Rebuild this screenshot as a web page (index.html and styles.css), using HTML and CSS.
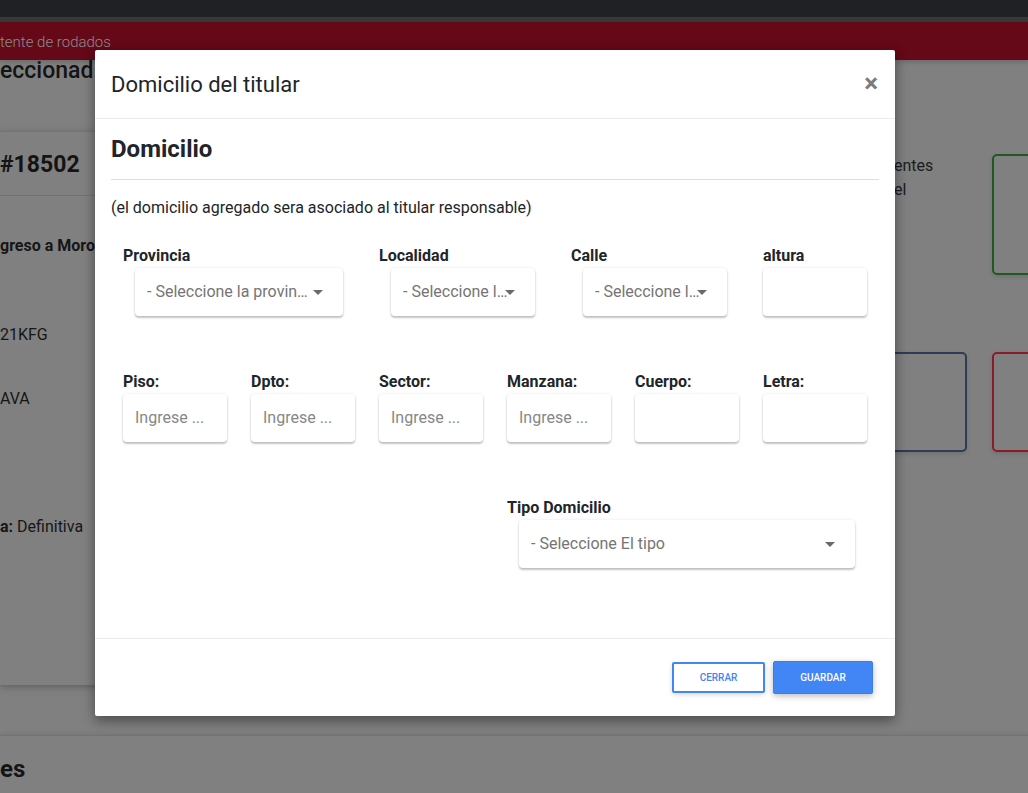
FILE: index.html
```html
<!DOCTYPE html>
<html lang="es">
<head>
<meta charset="utf-8">
<title>Domicilio del titular</title>
<link rel="stylesheet" href="styles.css">
</head>
<body>
<div class="topbar"></div>
<div class="topline"></div>
<nav class="nav"><span class="nav-text">tente de rodados</span></nav>
<main class="page">
  <h2 class="page-title">eccionad</h2>
  <div class="layout">
    <section class="card">
      <div class="card-head">#18502</div>
      <div class="card-body">
        <p class="line strong gap-a">greso a Moro</p>
        <p class="line gap-b">21KFG</p>
        <p class="line gap-c">AVA</p>
        <p class="line"><b>a:</b> Definitiva</p>
      </div>
    </section>
    <div class="spacer"></div>
    <aside class="side">
      <p class="side-text">entes<br>el</p>
      <div class="box green"></div>
      <div class="box blue"></div>
      <div class="box red"></div>
    </aside>
  </div>
  <section class="card2"><h2 class="card2-title">es</h2></section>
</main>

<div class="modal">
  <div class="modal-header">
    <h5 class="modal-title">Domicilio del titular</h5>
    <span class="close">&times;</span>
  </div>
  <div class="modal-body">
    <h4 class="section-title">Domicilio</h4>
    <hr class="divider">
    <p class="note">(el domicilio agregado sera asociado al titular responsable)</p>

    <div class="row">
      <div class="col c4">
        <label class="lbl">Provincia</label>
        <div class="select inset"><span class="sel-text">- Seleccione la provin…</span><span class="caret"></span></div>
      </div>
      <div class="col c3">
        <label class="lbl">Localidad</label>
        <div class="select inset"><span class="sel-text">- Seleccione l…</span><span class="caret"></span></div>
      </div>
      <div class="col c3">
        <label class="lbl">Calle</label>
        <div class="select inset"><span class="sel-text">- Seleccione l…</span><span class="caret"></span></div>
      </div>
      <div class="col c2">
        <label class="lbl">altura</label>
        <input class="field" type="text">
      </div>
    </div>

    <div class="row">
      <div class="col c2"><label class="lbl">Piso:</label><input class="field" type="text" placeholder="Ingrese ..."></div>
      <div class="col c2"><label class="lbl">Dpto:</label><input class="field" type="text" placeholder="Ingrese ..."></div>
      <div class="col c2"><label class="lbl">Sector:</label><input class="field" type="text" placeholder="Ingrese ..."></div>
      <div class="col c2"><label class="lbl">Manzana:</label><input class="field" type="text" placeholder="Ingrese ..."></div>
      <div class="col c2"><label class="lbl">Cuerpo:</label><input class="field" type="text"></div>
      <div class="col c2"><label class="lbl">Letra:</label><input class="field" type="text"></div>
    </div>

    <div class="row last">
      <div class="col c6 off6">
        <label class="lbl">Tipo Domicilio</label>
        <div class="select inset"><span class="sel-text">- Seleccione El tipo</span><span class="caret"></span></div>
      </div>
    </div>
  </div>
  <div class="modal-footer">
    <button class="btn btn-outline">Cerrar</button>
    <button class="btn btn-primary">Guardar</button>
  </div>
</div>
</body>
</html>
```

FILE: styles.css
```css
* { box-sizing: border-box; }
html, body { margin: 0; padding: 0; }
body {
  width: 1028px;
  height: 793px;
  overflow: hidden;
  background: #808080;
  font-family: Roboto, "Liberation Sans", Arial, sans-serif;
  color: #121314;
  position: relative;
}
.topbar { height: 17px; background: #202124; }
.topline { height: 5px; background: #383839; }
.nav {
  height: 38px;
  background: #650918;
  display: flex;
  align-items: center;
  box-shadow: 0 2px 5px rgba(0,0,0,.18);
  position: relative;
}
.nav-text { color: #8c8c8c; font-size: 15px; font-weight: 300; padding-top: 2px; }

.page { padding: 0; }
.page-title {
  margin: 0;
  height: 71px;
  font-size: 23px;
  font-weight: 500;
  line-height: 22px;
  color: #141414;
}
.layout { display: flex; }
.card {
  width: 300px;
  flex: none;
  height: 554px;
  border-top: 1px solid #747474;
  box-shadow: 0 2px 5px rgba(0,0,0,.16), 0 2px 10px rgba(0,0,0,.1);
}
.card-head {
  height: 64px;
  line-height: 66px;
  font-size: 23px;
  font-weight: 700;
  border-bottom: 1px solid #727272;
  color: #141414;
}
.card-body { padding-top: 38px; }
.line { margin: 0 0 40px; font-size: 16px; line-height: 24px; color: #161616; }
.strong { font-weight: 700; }
.gap-a { margin-bottom: 65px; }
.gap-b { margin-bottom: 40px; }
.gap-c { margin-bottom: 104px; }
.spacer { flex: 1; }
.side {
  width: 221px;
  flex: none;
  display: grid;
  grid-template-columns: 98px 98px;
  grid-template-rows: 121px 100px;
  column-gap: 25px;
  row-gap: 77px;
  padding-top: 23px;
  margin-right: -62px;
}
.side-text { margin: 0; padding: 0 0 0 25px; font-size: 16px; line-height: 24px; color: #1c1c1c; }
.box { border: 2px solid; border-radius: 5px; box-shadow: 0 2px 5px rgba(0,0,0,.12); }
.green { border-color: #1f5a21; }
.blue { border-color: #2f3b56; }
.red { border-color: #8c1b27; }
.card2 {
  margin-top: 50px;
  border-top: 1px solid #737373;
  box-shadow: 0 -1px 4px rgba(0,0,0,.1);
  height: 60px;
}
.card2-title { margin: 0; padding-top: 19px; font-size: 24px; line-height: 28px; font-weight: 700; color: #141414; }

/* Modal */
.modal {
  position: absolute;
  left: 95px;
  top: 50px;
  width: 800px;
  background: #fff;
  border-radius: 2px;
  box-shadow: 0 5px 11px rgba(0,0,0,.25), 0 4px 15px rgba(0,0,0,.2);
  color: #212529;
}
.modal-header {
  height: 69px;
  padding: 0 17px 0 16px;
  display: flex;
  align-items: center;
  justify-content: space-between;
  border-bottom: 1px solid #e9ecef;
}
.modal-title { margin: 0; font-size: 22px; font-weight: 400; line-height: 33px; padding-top: 1px; color: #212529; }
.close { font-size: 26px; font-weight: 700; color: #7b7b7b; line-height: 1; margin-top: -3px; }

.modal-body { padding: 16px 16px 14px; }
.section-title { margin: 0; font-size: 24px; font-weight: 700; line-height: 29px; color: #212529; }
.divider { margin: 15px 0 0; border: 0; border-top: 1px solid #dedede; height: 0; }
.note { margin: 16px 0 27px; font-size: 16px; line-height: 24px; color: #212529; }

.row { display: flex; flex-wrap: wrap; margin-bottom: 57px; }
.row.last { margin-bottom: 56px; }
.col { padding: 0 12px; display: flex; flex-direction: column; }
.c2 { width: 128px; }
.c3 { width: 192px; }
.c4 { width: 256px; }
.c6 { width: 384px; }
.off6 { margin-left: 384px; }
.lbl { font-size: 16px; font-weight: 700; line-height: 18px; margin-bottom: 3px; color: #212529; }
.select {
  height: 48px;
  border-radius: 4px;
  background: #fff;
  box-shadow: 0 2px 2px rgba(0,0,0,.22), 0 0 3px rgba(0,0,0,.1);
  position: relative;
  display: flex;
  align-items: center;
  padding: 0 30px 2px 12px;
}
.inset { margin: 0 12px; }
.sel-text {
  font-size: 16px;
  color: #757575;
  white-space: nowrap;
}
.caret {
  position: absolute;
  right: 20px;
  top: 22px;
  width: 0;
  height: 0;
  border-left: 5px solid transparent;
  border-right: 5px solid transparent;
  border-top: 5px solid #6a6a6a;
}
.field {
  height: 48px;
  width: 104px;
  border: 0;
  border-radius: 4px;
  background: #fff;
  box-shadow: 0 2px 2px rgba(0,0,0,.22), 0 0 3px rgba(0,0,0,.1);
  padding: 0 12px 2px;
  font-family: Roboto, "Liberation Sans", Arial, sans-serif;
  font-size: 16px;
  color: #212529;
  outline: none;
}
.field::placeholder { color: #878787; font-weight: 400; }

.modal-footer {
  height: 78px;
  border-top: 1px solid #e9ecef;
  display: flex;
  justify-content: flex-end;
  align-items: center;
  gap: 8px;
  padding-right: 22px;
}
.btn {
  font-family: Roboto, "Liberation Sans", Arial, sans-serif;
  font-size: 10px;
  font-weight: 500;
  text-transform: uppercase;
  border-radius: 2px;
  cursor: pointer;
  padding: 0;
}
.btn-outline {
  width: 93px;
  height: 31px;
  background: #fff;
  color: #4285f4;
  border: 2px solid #4285f4;
  box-shadow: 0 2px 5px rgba(0,0,0,.14);
}
.btn-primary {
  width: 100px;
  height: 33px;
  background: #4285f4;
  color: #fff;
  border: 1px solid #3b7de9;
  box-shadow: 0 2px 5px rgba(0,0,0,.16), 0 2px 10px rgba(0,0,0,.12);
}
```
